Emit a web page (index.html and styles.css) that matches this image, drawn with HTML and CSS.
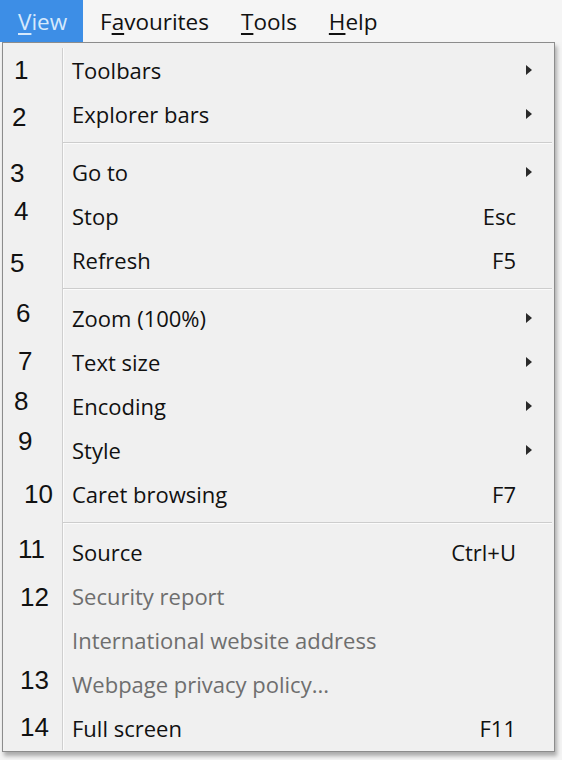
FILE: index.html
```html
<!DOCTYPE html>
<html>
<head>
<meta charset="utf-8">
<link rel="stylesheet" href="styles.css">
</head>
<body>
<div class="menubar">
  <div class="mb-item active"><u>V</u>iew</div>
  <div class="mb-item">F<u>a</u>vourites</div>
  <div class="mb-item"><u>T</u>ools</div>
  <div class="mb-item"><u>H</u>elp</div>
</div>
<div class="menu">
  <div class="row"><div class="gut"><span class="num n1">1</span></div><div class="label">Toolbars</div><div class="key"></div><div class="arr"><svg width="6" height="10" viewBox="0 0 6 10"><path d="M0 0L6 5L0 10Z"/></svg></div></div>
  <div class="row"><div class="gut"><span class="num n2">2</span></div><div class="label">Explorer bars</div><div class="key"></div><div class="arr"><svg width="6" height="10" viewBox="0 0 6 10"><path d="M0 0L6 5L0 10Z"/></svg></div></div>
  <div class="sep"><div class="gut"></div><div class="line"></div></div>
  <div class="row"><div class="gut"><span class="num n3">3</span></div><div class="label">Go to</div><div class="key"></div><div class="arr"><svg width="6" height="10" viewBox="0 0 6 10"><path d="M0 0L6 5L0 10Z"/></svg></div></div>
  <div class="row"><div class="gut"><span class="num n4">4</span></div><div class="label">Stop</div><div class="key">Esc</div><div class="arr"></div></div>
  <div class="row"><div class="gut"><span class="num n5">5</span></div><div class="label">Refresh</div><div class="key">F5</div><div class="arr"></div></div>
  <div class="sep"><div class="gut"></div><div class="line"></div></div>
  <div class="row"><div class="gut"><span class="num n6">6</span></div><div class="label">Zoom (100%)</div><div class="key"></div><div class="arr"><svg width="6" height="10" viewBox="0 0 6 10"><path d="M0 0L6 5L0 10Z"/></svg></div></div>
  <div class="row"><div class="gut"><span class="num n7">7</span></div><div class="label">Text size</div><div class="key"></div><div class="arr"><svg width="6" height="10" viewBox="0 0 6 10"><path d="M0 0L6 5L0 10Z"/></svg></div></div>
  <div class="row"><div class="gut"><span class="num n8">8</span></div><div class="label">Encoding</div><div class="key"></div><div class="arr"><svg width="6" height="10" viewBox="0 0 6 10"><path d="M0 0L6 5L0 10Z"/></svg></div></div>
  <div class="row"><div class="gut"><span class="num n9">9</span></div><div class="label">Style</div><div class="key"></div><div class="arr"><svg width="6" height="10" viewBox="0 0 6 10"><path d="M0 0L6 5L0 10Z"/></svg></div></div>
  <div class="row"><div class="gut"><span class="num n10">10</span></div><div class="label">Caret browsing</div><div class="key">F7</div><div class="arr"></div></div>
  <div class="sep"><div class="gut"></div><div class="line"></div></div>
  <div class="row"><div class="gut"><span class="num n11">11</span></div><div class="label">Source</div><div class="key">Ctrl+U</div><div class="arr"></div></div>
  <div class="row disabled"><div class="gut"><span class="num n12">12</span></div><div class="label">Security report</div><div class="key"></div><div class="arr"></div></div>
  <div class="row disabled"><div class="gut"></div><div class="label">International website address</div><div class="key"></div><div class="arr"></div></div>
  <div class="row disabled"><div class="gut"><span class="num n13">13</span></div><div class="label">Webpage privacy policy...</div><div class="key"></div><div class="arr"></div></div>
  <div class="row"><div class="gut"><span class="num n14">14</span></div><div class="label">Full screen</div><div class="key">F11</div><div class="arr"></div></div>
</div>
</body>
</html>
```
FILE: styles.css
```css
html, body {
  margin: 0;
  padding: 0;
  background: #f4f4f4;
  width: 562px;
  height: 760px;
  overflow: hidden;
}
body {
  font-family: "Open Sans", "Noto Sans", sans-serif;
  color: #111;
}
.menubar {
  display: flex;
  height: 42px;
  background: #f5f5f5;
  font-size: 22.5px;
}
.mb-item {
  display: flex;
  align-items: center;
  padding: 0 16px;
  color: #111;
}
.mb-item u {
  text-decoration-thickness: 2px;
  text-underline-offset: 3px;
}
.mb-item.active {
  background: #3d8ee6;
  color: #d6e9fc;
  width: 83px;
  box-sizing: border-box;
  padding-left: 18px;
  margin-right: 1px;
}
.menu {
  margin-left: 2px;
  width: 553px;
  box-sizing: border-box;
  border: 1px solid #8c8c8c;
  background: #f0f0f0;
  padding: 5px 0 1px;
  box-shadow: 2px 4px 4px rgba(0, 0, 0, 0.3);
  display: flex;
  flex-direction: column;
}
.row, .sep {
  display: grid;
  grid-template-columns: 60px 1fr auto 38px;
}
.row {
  height: 44px;
  align-items: center;
  font-size: 22px;
}
.sep {
  height: 14px;
}
.gut {
  height: 100%;
  border-right: 1px solid #cfcfcf;
  box-shadow: 1px 0 0 #fbfbfb;
  display: flex;
  align-items: center;
}
.line {
  grid-column: 2 / 5;
  align-self: center;
  height: 1px;
  background: #cdcdcd;
  border-bottom: 1px solid #fbfbfb;
  margin-right: 2px;
}
.label {
  padding-left: 9px;
  white-space: nowrap;
}
.key {
  text-align: right;
  white-space: nowrap;
}
.arr {
  display: flex;
  align-items: center;
  padding-left: 10px;
}
.arr svg {
  fill: #2a2a2a;
}
.disabled .label {
  color: #6e6e6e;
}
.num {
  font-family: "Liberation Sans", Arial, sans-serif;
  font-size: 26px;
  color: #111;
  position: relative;
}
.n1 { left: 11px; top: 0; }
.n2 { left: 9px; top: 3px; }
.n3 { left: 7px; top: 1px; }
.n4 { left: 11px; top: -5px; }
.n5 { left: 7px; top: 3px; }
.n6 { left: 13px; top: -5px; }
.n7 { left: 15px; top: -1px; }
.n8 { left: 11px; top: -5px; }
.n9 { left: 15px; top: -9px; }
.n10 { left: 21px; top: 0; }
.n11 { left: 15px; top: -3px; }
.n12 { left: 17px; top: 1px; }
.n13 { left: 17px; top: -4px; }
.n14 { left: 17px; top: -1px; }
```
